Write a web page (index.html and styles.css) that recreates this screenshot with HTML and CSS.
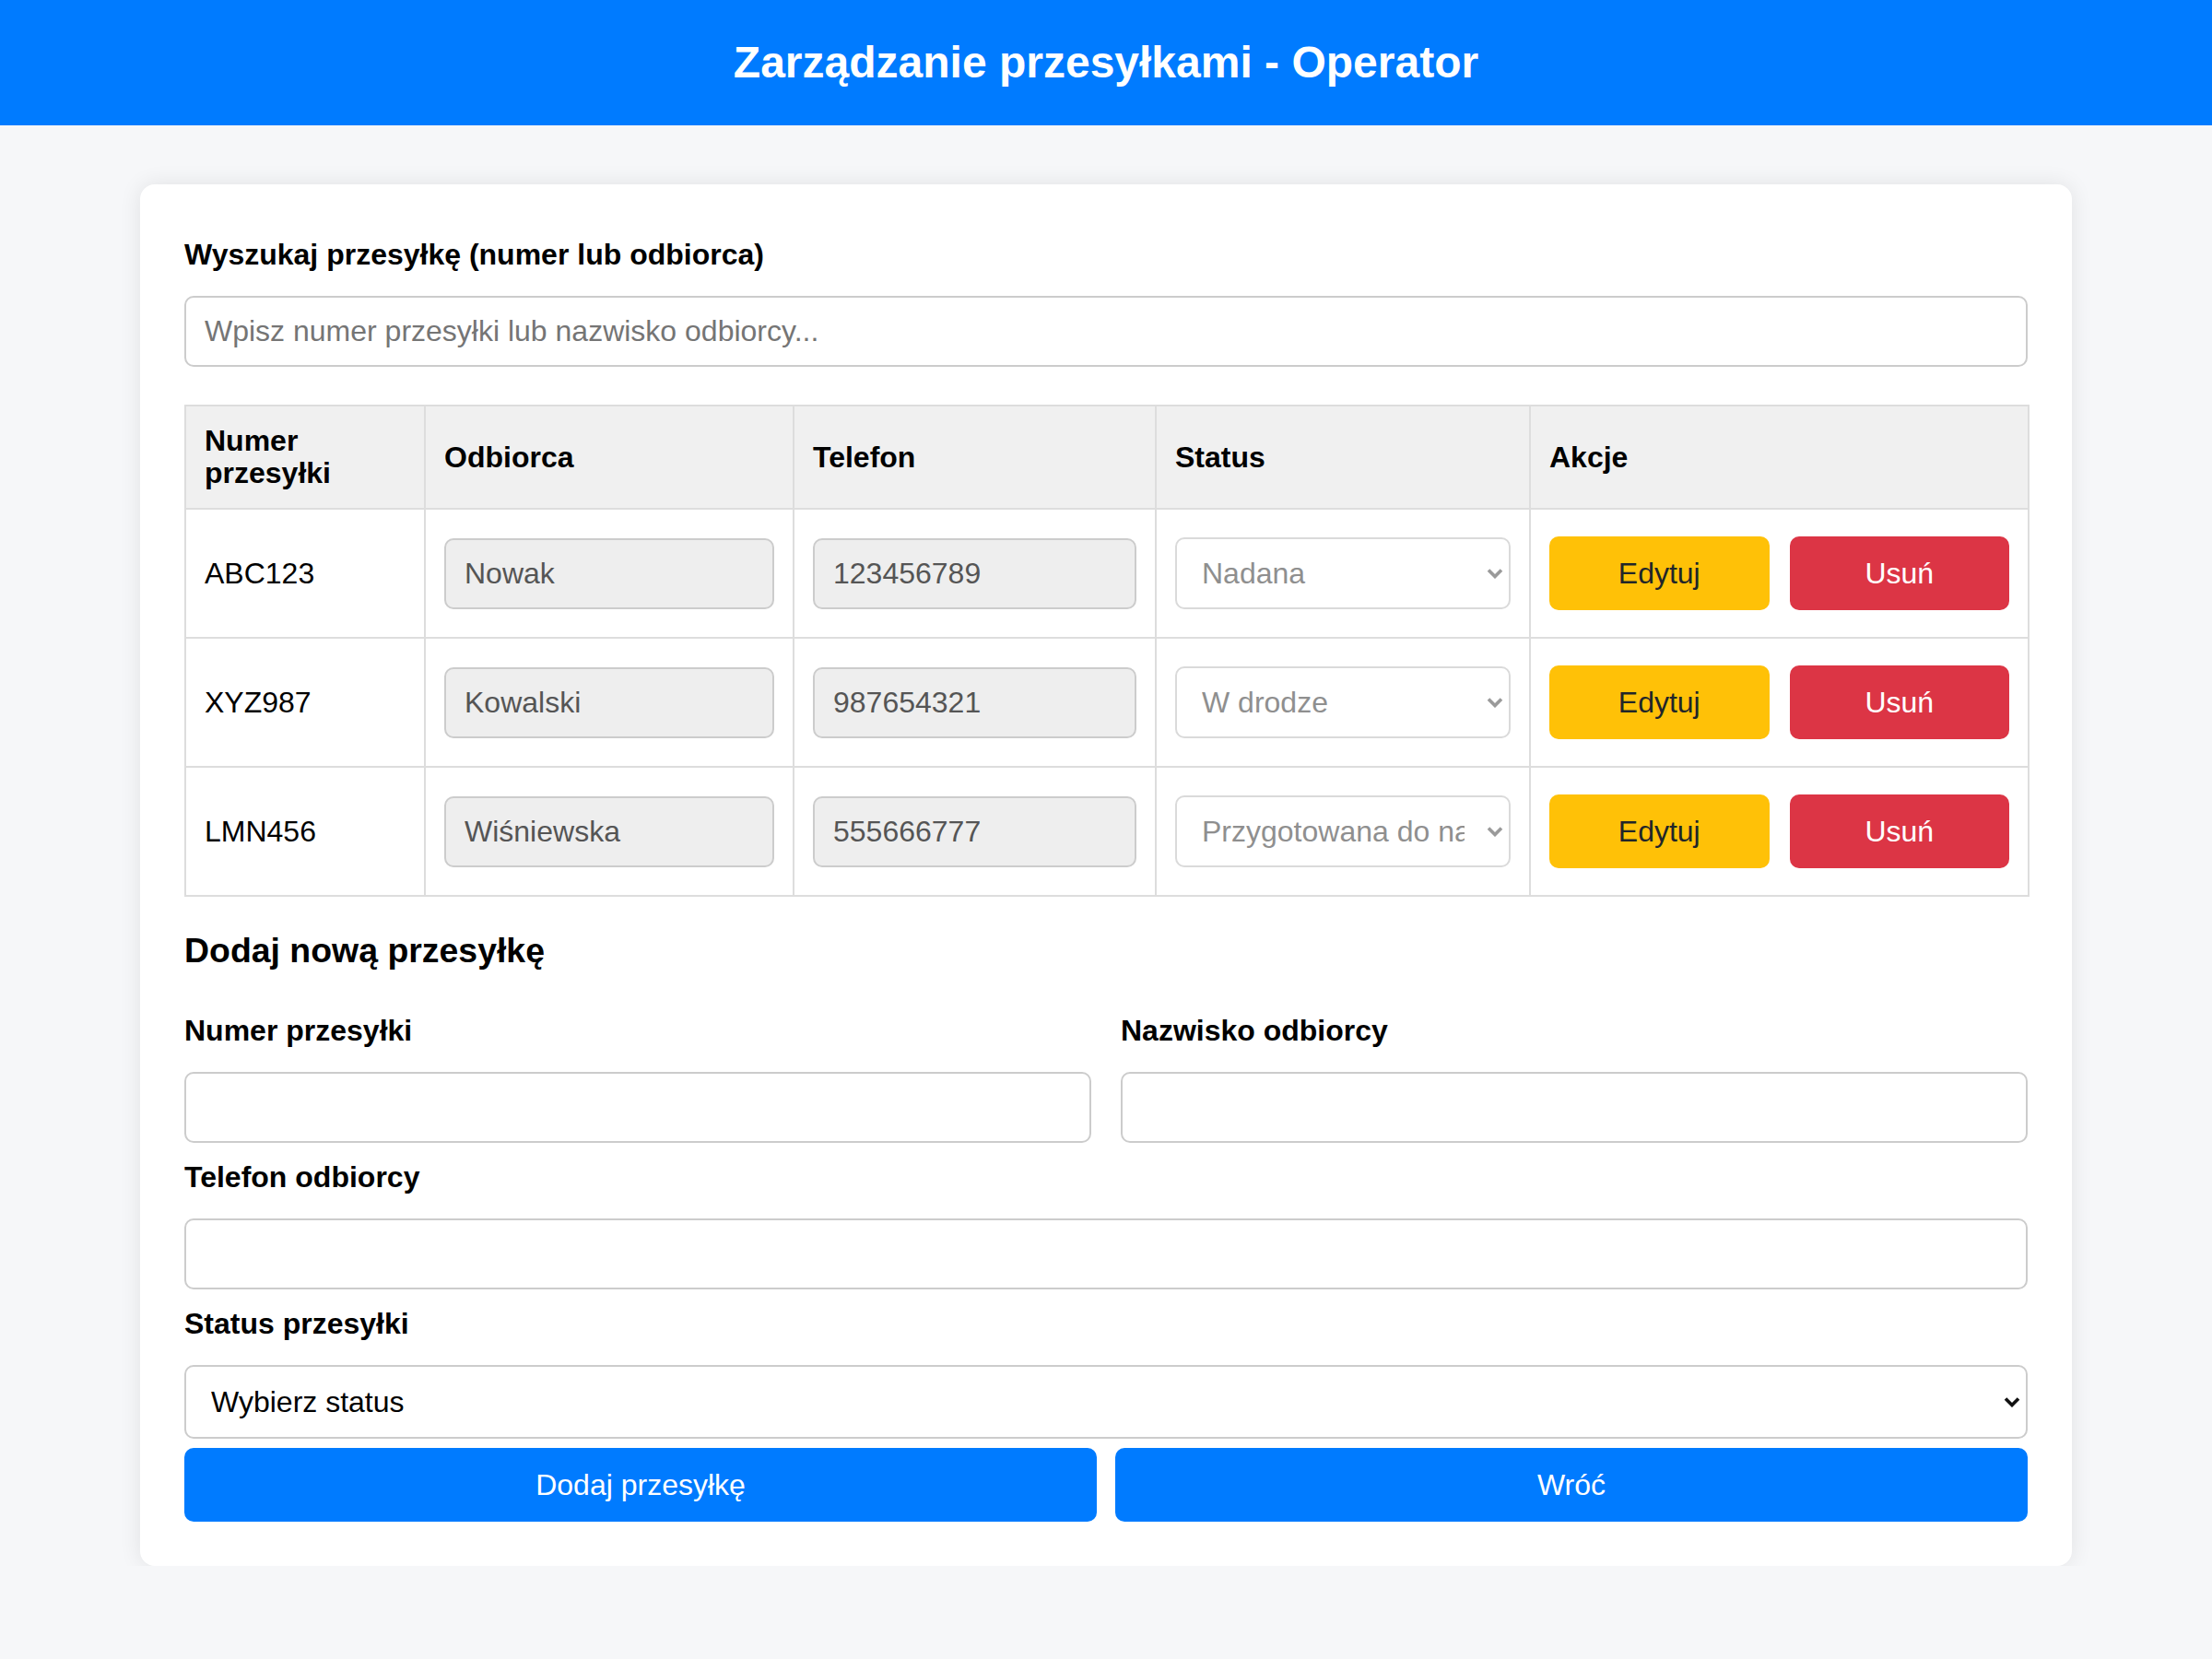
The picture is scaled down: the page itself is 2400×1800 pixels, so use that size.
FILE: index.html
```html
<!DOCTYPE html>
<html lang="pl">
<head>
<meta charset="utf-8">
<title>Zarządzanie przesyłkami - Operator</title>
<link rel="stylesheet" href="styles.css">
</head>
<body>
<header class="topbar">
  <h1>Zarządzanie przesyłkami - Operator</h1>
</header>

<main class="card">
  <div class="field search">
    <label for="q">Wyszukaj przesyłkę (numer lub odbiorca)</label>
    <input id="q" type="text" class="text-input" placeholder="Wpisz numer przesyłki lub nazwisko odbiorcy...">
  </div>

  <table class="shipments">
    <colgroup>
      <col class="c1"><col class="c2"><col class="c3"><col class="c4"><col class="c5">
    </colgroup>
    <thead>
      <tr>
        <th>Numer przesyłki</th>
        <th>Odbiorca</th>
        <th>Telefon</th>
        <th>Status</th>
        <th>Akcje</th>
      </tr>
    </thead>
    <tbody>
      <tr>
        <td>ABC123</td>
        <td><input class="cell-input" type="text" value="Nowak" readonly></td>
        <td><input class="cell-input" type="text" value="123456789" readonly></td>
        <td>
          <div class="select-wrap">
            <select class="cell-select" disabled><option>Nadana</option></select>
            <svg class="chev chev-muted" width="18" height="12" viewBox="0 0 18 12"><path d="M2 2.5 L9 9.5 L16 2.5" fill="none" stroke-width="3.6"/></svg>
          </div>
        </td>
        <td>
          <div class="row-actions">
            <button class="btn btn-edit" type="button">Edytuj</button>
            <button class="btn btn-delete" type="button">Usuń</button>
          </div>
        </td>
      </tr>
      <tr>
        <td>XYZ987</td>
        <td><input class="cell-input" type="text" value="Kowalski" readonly></td>
        <td><input class="cell-input" type="text" value="987654321" readonly></td>
        <td>
          <div class="select-wrap">
            <select class="cell-select" disabled><option>W drodze</option></select>
            <svg class="chev chev-muted" width="18" height="12" viewBox="0 0 18 12"><path d="M2 2.5 L9 9.5 L16 2.5" fill="none" stroke-width="3.6"/></svg>
          </div>
        </td>
        <td>
          <div class="row-actions">
            <button class="btn btn-edit" type="button">Edytuj</button>
            <button class="btn btn-delete" type="button">Usuń</button>
          </div>
        </td>
      </tr>
      <tr>
        <td>LMN456</td>
        <td><input class="cell-input" type="text" value="Wiśniewska" readonly></td>
        <td><input class="cell-input" type="text" value="555666777" readonly></td>
        <td>
          <div class="select-wrap">
            <select class="cell-select" disabled><option>Przygotowana do nadania</option></select>
            <svg class="chev chev-muted" width="18" height="12" viewBox="0 0 18 12"><path d="M2 2.5 L9 9.5 L16 2.5" fill="none" stroke-width="3.6"/></svg>
          </div>
        </td>
        <td>
          <div class="row-actions">
            <button class="btn btn-edit" type="button">Edytuj</button>
            <button class="btn btn-delete" type="button">Usuń</button>
          </div>
        </td>
      </tr>
    </tbody>
  </table>

  <h3 class="section-title">Dodaj nową przesyłkę</h3>

  <div class="form-grid">
    <div class="field">
      <label for="num">Numer przesyłki</label>
      <input id="num" type="text" class="text-input">
    </div>
    <div class="field">
      <label for="name">Nazwisko odbiorcy</label>
      <input id="name" type="text" class="text-input">
    </div>
  </div>

  <div class="field">
    <label for="tel">Telefon odbiorcy</label>
    <input id="tel" type="text" class="text-input">
  </div>

  <div class="field">
    <label for="st">Status przesyłki</label>
    <div class="select-wrap form-select-wrap">
      <select id="st" class="form-select">
        <option>Wybierz status</option>
        <option>Nadana</option>
        <option>W drodze</option>
        <option>Przygotowana do nadania</option>
      </select>
      <svg class="chev chev-dark" width="18" height="12" viewBox="0 0 18 12"><path d="M2 2.5 L9 9.5 L16 2.5" fill="none" stroke-width="3.6"/></svg>
    </div>
  </div>

  <div class="form-actions">
    <button class="btn btn-primary" type="button">Dodaj przesyłkę</button>
    <button class="btn btn-primary" type="button">Wróć</button>
  </div>
</main>
</body>
</html>
```

FILE: styles.css
```css
* {
  box-sizing: border-box;
}

html, body {
  margin: 0;
  padding: 0;
}

body {
  background: #f6f7f9;
  font-family: "Liberation Sans", Arial, sans-serif;
  font-size: 32px;
  color: #000;
}

input, select, button {
  font-family: inherit;
  font-size: 32px;
}

/* Header bar */
.topbar {
  background: #007bff;
  color: #fff;
  padding: 40px 0;
  text-align: center;
}

.topbar h1 {
  margin: 0;
  font-size: 48px;
  line-height: 56px;
  font-weight: bold;
}

/* Card */
.card {
  width: 2096px;
  margin: 64px auto 0;
  padding: 48px;
  background: #fff;
  border-radius: 16px;
  box-shadow: 0 0 24px rgba(0, 0, 0, 0.09);
}

.field {
  display: flow-root;
}

.field label {
  display: block;
  margin: 10px 0 26px;
  font-weight: bold;
  line-height: normal;
}

.text-input {
  display: block;
  width: 100%;
  height: 77px;
  margin: 10px 0 9px;
  padding: 0 20px;
  border: 2px solid #ccc;
  border-radius: 10px;
  background: #fff;
  color: #000;
  outline: none;
}

.text-input::placeholder {
  color: #757575;
}

/* Table */
.shipments {
  width: 100%;
  margin-top: 32px;
  border-collapse: collapse;
  table-layout: fixed;
}

.shipments col.c1 { width: 260px; }
.shipments col.c2 { width: 400px; }
.shipments col.c3 { width: 393px; }
.shipments col.c4 { width: 406px; }
.shipments col.c5 { width: 541px; }

.shipments th,
.shipments td {
  border: 2px solid #ddd;
  padding: 20px;
  text-align: left;
  vertical-align: middle;
}

.shipments th {
  background: #f0f0f0;
  font-weight: bold;
  line-height: 35px;
}

.shipments td {
  line-height: normal;
}

.cell-input {
  display: block;
  width: 100%;
  height: 77px;
  margin: 10.5px 0;
  padding: 0 20px;
  border: 2px solid #ccc;
  border-radius: 10px;
  background: #eee;
  color: #555;
  outline: none;
}

.select-wrap {
  position: relative;
}

.cell-select {
  display: block;
  width: 100%;
  height: 78px;
  padding: 0 48px 0 27px;
  border: 2px solid #dadada;
  border-radius: 10px;
  background: #fff;
  color: #8f8f8f;
  opacity: 1;
  -webkit-appearance: none;
  appearance: none;
}

.chev {
  position: absolute;
  right: 8px;
  top: 50%;
  transform: translateY(-50%);
  pointer-events: none;
}

.chev-muted path {
  stroke: #9a9a9a;
}

.chev-dark path {
  stroke: #111;
}

.row-actions {
  display: flex;
  justify-content: space-between;
  gap: 22px;
}

.btn {
  border: none;
  border-radius: 10px;
  height: 80px;
  cursor: pointer;
  padding: 0;
}

.row-actions .btn {
  flex: 1;
}

.btn-edit {
  background: #ffc107;
  color: #212529;
}

.btn-delete {
  background: #dc3545;
  color: #fff;
}

.btn-primary {
  background: #007bff;
  color: #fff;
}

/* Add form */
.section-title {
  margin: 37px 0;
  font-size: 37.44px;
  font-weight: bold;
  line-height: normal;
}

.form-grid {
  display: grid;
  grid-template-columns: 1fr 1fr;
  column-gap: 32px;
}

.form-select-wrap {
  margin: 10px 0;
}

.form-select {
  display: block;
  width: 100%;
  height: 80px;
  padding: 0 48px 0 27px;
  border: 2px solid #ccc;
  border-radius: 10px;
  background: #fff;
  color: #000;
  -webkit-appearance: none;
  appearance: none;
  outline: none;
}

.form-actions {
  display: grid;
  grid-template-columns: 1fr 1fr;
  column-gap: 20px;
}
```
